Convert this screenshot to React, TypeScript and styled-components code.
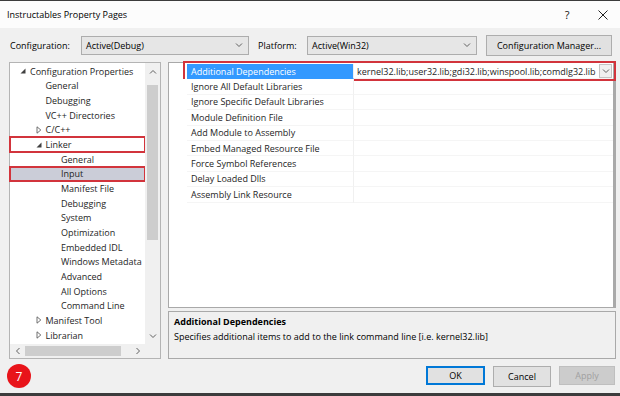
import React from 'react';
import styled, { createGlobalStyle } from 'styled-components';

type TreeItem = {
  label: string;
  level: number;
  toggle?: 'open' | 'closed';
  selected?: boolean;
  marked?: boolean;
};

const treeItems: TreeItem[] = [
  { label: 'Configuration Properties', level: 0, toggle: 'open' },
  { label: 'General', level: 1 },
  { label: 'Debugging', level: 1 },
  { label: 'VC++ Directories', level: 1 },
  { label: 'C/C++', level: 1, toggle: 'closed' },
  { label: 'Linker', level: 1, toggle: 'open', marked: true },
  { label: 'General', level: 2 },
  { label: 'Input', level: 2, selected: true, marked: true },
  { label: 'Manifest File', level: 2 },
  { label: 'Debugging', level: 2 },
  { label: 'System', level: 2 },
  { label: 'Optimization', level: 2 },
  { label: 'Embedded IDL', level: 2 },
  { label: 'Windows Metadata', level: 2 },
  { label: 'Advanced', level: 2 },
  { label: 'All Options', level: 2 },
  { label: 'Command Line', level: 2 },
  { label: 'Manifest Tool', level: 1, toggle: 'closed' },
  { label: 'Librarian', level: 1, toggle: 'closed' },
];

const properties = [
  { name: 'Additional Dependencies', value: 'kernel32.lib;user32.lib;gdi32.lib;winspool.lib;comdlg32.lib', selected: true },
  { name: 'Ignore All Default Libraries', value: '' },
  { name: 'Ignore Specific Default Libraries', value: '' },
  { name: 'Module Definition File', value: '' },
  { name: 'Add Module to Assembly', value: '' },
  { name: 'Embed Managed Resource File', value: '' },
  { name: 'Force Symbol References', value: '' },
  { name: 'Delay Loaded Dlls', value: '' },
  { name: 'Assembly Link Resource', value: '' },
];

const Chevron = ({ dir = 'down' }: { dir?: 'down' | 'up' | 'left' | 'right' }) => {
  const paths = {
    down: 'M1 2.5 L4 5.5 L7 2.5',
    up: 'M1 5.5 L4 2.5 L7 5.5',
    left: 'M5.5 1 L2.5 4 L5.5 7',
    right: 'M2.5 1 L5.5 4 L2.5 7',
  };
  return (
    <svg width="8" height="8" viewBox="0 0 8 8">
      <path d={paths[dir]} fill="none" stroke="#606060" strokeWidth="1" />
    </svg>
  );
};

const Toggle = ({ open }: { open: boolean }) =>
  open ? (
    <svg width="6" height="6" viewBox="0 0 6 6">
      <path d="M5.5 0.5 L5.5 5.5 L0.5 5.5 Z" fill="#404040" />
    </svg>
  ) : (
    <svg width="6" height="8" viewBox="0 0 6 8">
      <path d="M1 0.8 L4.8 4 L1 7.2 Z" fill="none" stroke="#606060" strokeWidth="0.9" />
    </svg>
  );

const CloseIcon = () => (
  <svg width="10" height="10" viewBox="0 0 10 10">
    <path d="M0.5 0.5 L9.5 9.5 M9.5 0.5 L0.5 9.5" stroke="#222" strokeWidth="1" />
  </svg>
);

const App = () => (
  <Dialog>
    <GlobalStyle />
    <TitleBar>
      <Title>Instructables Property Pages</Title>
      <CaptionButton $w={38}>?</CaptionButton>
      <CaptionButton $w={34}>
        <CloseIcon />
      </CaptionButton>
    </TitleBar>

    <ConfigBar>
      <FieldLabel $w={71}>Configuration:</FieldLabel>
      <Combo $w={168}>
        <span>Active(Debug)</span>
        <Chevron />
      </Combo>
      <FieldLabel $w={49} style={{ marginLeft: 9 }}>Platform:</FieldLabel>
      <Combo $w={170}>
        <span>Active(Win32)</span>
        <Chevron />
      </Combo>
      <PushButton $w={126} style={{ marginLeft: 9 }}>Configuration Manager...</PushButton>
    </ConfigBar>

    <Main>
      <TreePanel>
        <TreeBody>
          {treeItems.map((item, i) => (
            <TreeRow key={i} $level={item.level} $selected={item.selected} $marked={item.marked}>
              <ToggleSlot>{item.toggle && <Toggle open={item.toggle === 'open'} />}</ToggleSlot>
              {item.label}
            </TreeRow>
          ))}
        </TreeBody>
        <VScroll>
          <ScrollArrow><Chevron dir="up" /></ScrollArrow>
          <VTrack>
            <VThumb />
          </VTrack>
          <ScrollArrow><Chevron dir="down" /></ScrollArrow>
        </VScroll>
        <HScroll>
          <ScrollArrow $h><Chevron dir="left" /></ScrollArrow>
          <HTrack>
            <HThumb />
          </HTrack>
          <ScrollArrow $h><Chevron dir="right" /></ScrollArrow>
        </HScroll>
        <ScrollCorner />
      </TreePanel>

      <RightColumn>
        <PropGrid>
          {properties.map((p, i) => (
            <PropRow key={i} $marked={p.selected}>
              <Gutter />
              <PropName $selected={p.selected}>{p.name}</PropName>
              <PropValue>
                <ValueText>{p.value}</ValueText>
                {p.selected && (
                  <DropButton>
                    <Chevron />
                  </DropButton>
                )}
              </PropValue>
            </PropRow>
          ))}
        </PropGrid>
        <Description>
          <DescTitle>Additional Dependencies</DescTitle>
          <DescText>Specifies additional items to add to the link command line [i.e. kernel32.lib]</DescText>
        </Description>
      </RightColumn>
    </Main>

    <Footer>
      <StepBadge>7</StepBadge>
      <FooterButtons>
        <PushButton $w={59} $variant="primary">OK</PushButton>
        <PushButton $w={58}>Cancel</PushButton>
        <PushButton $w={56} $variant="disabled">Apply</PushButton>
      </FooterButtons>
    </Footer>
  </Dialog>
);

const GlobalStyle = createGlobalStyle`
  html, body {
    margin: 0;
    padding: 0;
    background: #f0f0f0;
  }
  body {
    font-family: 'Open Sans', 'Noto Sans', sans-serif;
    font-size: 9px;
    color: #000;
  }
  * {
    box-sizing: border-box;
  }
`;

const Dialog = styled.div`
  width: 620px;
  height: 396px;
  display: flex;
  flex-direction: column;
  background: #f0f0f0;
  border-top: 1px solid #3c3c3c;
  border-bottom: 3px solid #3c3c3c;
  overflow: hidden;
`;

const TitleBar = styled.div`
  height: 27px;
  flex: none;
  display: flex;
  align-items: center;
  padding-left: 7px;
  background: #fcfcfc;
`;

const Title = styled.span`
  flex: 1;
  font-size: 9px;
`;

const CaptionButton = styled.span<{ $w: number }>`
  width: ${(p) => p.$w}px;
  display: flex;
  justify-content: center;
  align-items: center;
  font-size: 11px;
  color: #111;
`;

const ConfigBar = styled.div`
  height: 34px;
  flex: none;
  display: flex;
  align-items: center;
  padding: 0 8px 0 10px;
`;

const FieldLabel = styled.span<{ $w: number }>`
  width: ${(p) => p.$w}px;
  flex: none;
`;

const Combo = styled.div<{ $w: number }>`
  width: ${(p) => p.$w}px;
  height: 19px;
  flex: none;
  display: flex;
  align-items: center;
  justify-content: space-between;
  padding: 0 5px 0 4px;
  background: #e6e6e6;
  border: 1px solid #adadad;
`;

const PushButton = styled.div<{ $w: number; $variant?: 'primary' | 'disabled' }>`
  width: ${(p) => p.$w}px;
  height: ${(p) => (p.$variant ? 19 : 21)}px;
  flex: none;
  display: flex;
  align-items: center;
  justify-content: center;
  background: ${(p) => (p.$variant === 'disabled' ? '#cccccc' : '#e1e1e1')};
  color: ${(p) => (p.$variant === 'disabled' ? '#a0a0a0' : '#000')};
  border: 1px solid ${(p) => (p.$variant === 'primary' ? '#0078d7' : p.$variant === 'disabled' ? '#bfbfbf' : '#adadad')};
  box-shadow: ${(p) => (p.$variant === 'primary' ? 'inset 0 0 0 1px #0078d7' : 'none')};
`;

const Main = styled.div`
  height: 297px;
  flex: none;
  display: flex;
  gap: 7px;
  padding: 0 4px 0 9px;
`;

const TreePanel = styled.div`
  width: 152px;
  flex: none;
  display: grid;
  grid-template-columns: 1fr 15px;
  grid-template-rows: 1fr 14px;
  background: #fff;
  border: 1px solid #b4b4b4;
`;

const TreeBody = styled.div`
  padding-top: 1px;
  min-width: 0;
`;

const TreeRow = styled.div<{ $level: number; $selected?: boolean; $marked?: boolean }>`
  height: 14.67px;
  display: flex;
  align-items: center;
  padding-left: ${(p) => 10 + p.$level * 15.5}px;
  white-space: nowrap;
  color: #1e1e1e;
  background: ${(p) => (p.$selected ? '#cbcdd8' : 'transparent')};
  outline: ${(p) => (p.$marked ? '2px solid #d2343c' : 'none')};
  outline-offset: -1px;
`;

const ToggleSlot = styled.span`
  width: 10px;
  flex: none;
  display: flex;
  align-items: center;
`;

const VScroll = styled.div`
  display: flex;
  flex-direction: column;
  background: #f0f0f0;
`;

const ScrollArrow = styled.div<{ $h?: boolean }>`
  width: 15px;
  height: ${(p) => (p.$h ? 14 : 17)}px;
  flex: none;
  display: flex;
  align-items: center;
  justify-content: center;
`;

const VTrack = styled.div`
  flex: 1;
  padding: 5px 2px 0 2px;
`;

const VThumb = styled.div`
  height: 155px;
  background: #cdcdcd;
`;

const HScroll = styled.div`
  display: flex;
  background: #f0f0f0;
`;

const HTrack = styled.div`
  flex: 1;
  padding: 2px 0;
`;

const HThumb = styled.div`
  width: 96px;
  height: 100%;
  background: #cdcdcd;
`;

const ScrollCorner = styled.div`
  background: #f0f0f0;
`;

const RightColumn = styled.div`
  flex: 1;
  display: flex;
  flex-direction: column;
  gap: 3px;
`;

const PropGrid = styled.div`
  flex: 1;
  padding-top: 1px;
  background: #fff;
  border: 1px solid #a9a9a9;
  border-right-width: 3px;
`;

const PropRow = styled.div<{ $marked?: boolean }>`
  position: relative;
  height: 15.4px;
  display: grid;
  grid-template-columns: 18px 167px 1fr;
  &::after {
    content: '';
    display: ${(p) => (p.$marked ? 'block' : 'none')};
    position: absolute;
    left: 14px;
    right: -3px;
    top: -3px;
    bottom: -2px;
    border: 2px solid #d2343c;
    pointer-events: none;
  }
`;

const Gutter = styled.div`
  background: #fff;
`;

const PropName = styled.div<{ $selected?: boolean }>`
  display: flex;
  align-items: center;
  padding-left: 4px;
  white-space: nowrap;
  overflow: hidden;
  background: ${(p) => (p.$selected ? '#3399ff' : '#fff')};
  color: ${(p) => (p.$selected ? '#fff' : '#1e1e1e')};
  border-bottom: 1px solid ${(p) => (p.$selected ? '#3399ff' : '#f5f5f5')};
  border-right: 1px solid #f0f0f0;
`;

const PropValue = styled.div`
  display: flex;
  align-items: center;
  padding-left: 3px;
  border-bottom: 1px solid #f5f5f5;
  min-width: 0;
`;

const ValueText = styled.span`
  flex: 1;
  white-space: nowrap;
  overflow: hidden;
  color: #1e1e1e;
`;

const DropButton = styled.div`
  width: 13px;
  height: 14px;
  flex: none;
  margin-right: 1px;
  display: flex;
  align-items: center;
  justify-content: center;
  background: #f0f0f0;
  border: 1px solid #c4c4c4;
`;

const Description = styled.div`
  height: 48px;
  flex: none;
  padding: 3px 5px;
  border: 1px solid #a9a9a9;
  background: #f0f0f0;
`;

const DescTitle = styled.div`
  font-weight: 700;
  line-height: 14px;
`;

const DescText = styled.div`
  line-height: 15px;
`;

const Footer = styled.div`
  height: 34px;
  flex: none;
  display: flex;
  align-items: center;
  padding: 0 5px 0 7px;
`;

const StepBadge = styled.div`
  width: 24px;
  height: 24px;
  border-radius: 50%;
  background: #e8141a;
  color: #fff;
  font-size: 12px;
  display: flex;
  align-items: center;
  justify-content: center;
`;

const FooterButtons = styled.div`
  margin-left: auto;
  display: flex;
  gap: 8px;
`;

export default App;
